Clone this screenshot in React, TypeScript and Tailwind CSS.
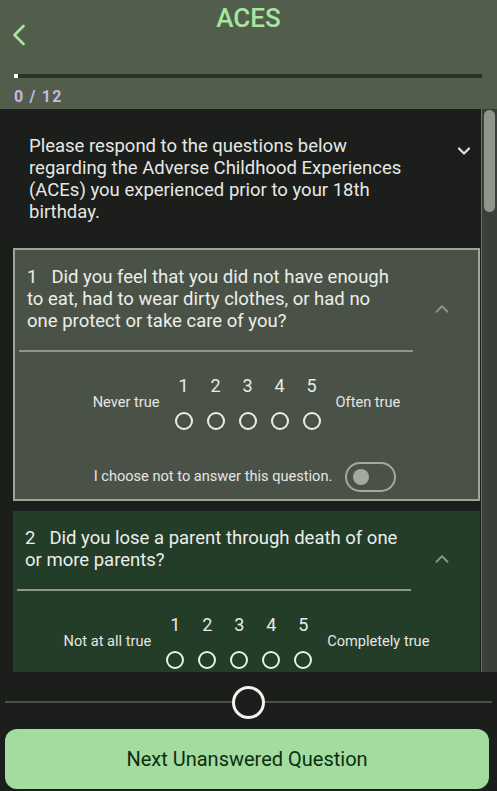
import { ChevronDown, ChevronUp } from "lucide-react";

const SCALE = [1, 2, 3, 4, 5];

function Scale({ low, high }: { low: string; high: string }) {
  return (
    <div className="flex items-center justify-center">
      <span className="text-[14.6px] text-[#e4e6e2] mr-[8px]">{low}</span>
      <div className="flex">
        {SCALE.map((n) => (
          <div key={n} className="w-[32px] flex flex-col items-center">
            <span className="text-[18px] leading-[20px] text-[#e8eae6]">{n}</span>
            <span className="mt-[16px] w-[18px] h-[18px] rounded-full border-2 border-[#eceeea]" />
          </div>
        ))}
      </div>
      <span className="text-[14.6px] text-[#e4e6e2] ml-[8px]">{high}</span>
    </div>
  );
}

function QuestionCard({
  num,
  text,
  low,
  high,
  className,
  children,
}: {
  num: number;
  text: string;
  low: string;
  high: string;
  className: string;
  children?: React.ReactNode;
}) {
  return (
    <div className={`ml-[13px] mr-[1px] ${className}`}>
      <div className="flex">
        <p className="w-[387px] pl-[12px] text-[18.5px] leading-[22px] text-[#eceeea]">
          <span className="mr-[14px]">{num}</span>
          {text}
        </p>
        <div className="flex-1 flex items-center justify-center pt-[20px] pl-[4px]">
          <ChevronUp size={22} strokeWidth={2} className="text-[#8c9489]" />
        </div>
      </div>
      <div className="ml-[4px] w-[394px] h-[2px] bg-[#8e958a] mt-[18px]" />
      <div className="mt-[24px]">
        <Scale low={low} high={high} />
      </div>
      {children}
    </div>
  );
}

export default function App() {
  return (
    <div className="w-[497px] h-[791px] flex flex-col overflow-hidden bg-[#1b1e1b] font-['Roboto',sans-serif]">
      {/* header */}
      <div className="h-[109px] shrink-0 bg-[#535d4b] px-[14px]">
        <div className="grid grid-cols-[40px_1fr_40px] grid-rows-[35px]">
          <div className="pt-[24px] -ml-[2px]">
            <svg width="14" height="22" viewBox="0 0 14 22" fill="none">
              <polyline
                points="11.5,2 2.5,11 11.5,20"
                stroke="#a8e4a2"
                strokeWidth="2.6"
                strokeLinecap="round"
                strokeLinejoin="round"
              />
            </svg>
          </div>
          <h1 className="text-center text-[26px] leading-[34px] font-medium text-[#a8e4a2] pt-[1px]">ACES</h1>
          <div />
        </div>
        <div className="mt-[39px] h-[4px] w-[468px] bg-[#2d322b] flex">
          <div className="w-[4px] h-[4px] bg-white" />
        </div>
        <div className="mt-[9px] text-[16px] leading-[20px] font-bold tracking-[1.2px] text-[#c6b8de]">0 / 12</div>
      </div>

      {/* scroll area */}
      <div className="flex-1 flex min-h-0">
        <div className="flex-1 overflow-hidden">
          <div className="flex pt-[26px] pl-[29px]">
            <p className="w-[382px] text-[18.5px] leading-[22px] text-[#e6e8e4]">
              Please respond to the questions below regarding the Adverse Childhood Experiences (ACEs) you
              experienced prior to your 18th birthday.
            </p>
            <div className="pl-[43px] pt-[6px]">
              <ChevronDown size={20} strokeWidth={2.6} className="text-[#e2e4e0]" />
            </div>
          </div>

          <div className="mt-[25px]">
            <QuestionCard
              num={1}
              text="Did you feel that you did not have enough to eat, had to wear dirty clothes, or had no one protect or take care of you?"
              low="Never true"
              high="Often true"
              className="bg-[#4a5248] border-2 border-[#9ea59a] pt-[16px] pb-[7px]"
            >
              <div className="mt-[32px] flex items-center justify-center gap-[13px] pr-[3px]">
                <span className="text-[14.6px] text-[#e4e6e2]">I choose not to answer this question.</span>
                <span className="w-[51px] h-[30px] rounded-full border-2 border-[#a3a99f] flex items-center pl-[6px]">
                  <span className="w-[16px] h-[16px] rounded-full bg-[#a3a99f]" />
                </span>
              </div>
            </QuestionCard>
          </div>

          <div className="mt-[10px]">
            <QuestionCard
              num={2}
              text="Did you lose a parent through death of one or more parents?"
              low="Not at all true"
              high="Completely true"
              className="bg-[#233d29] pt-[16px] pb-[20px]"
            />
          </div>
        </div>
        {/* scrollbar */}
        <div className="w-[16px] shrink-0 bg-[#3a3f37] border-l border-[#6b7167] pt-[1px] pl-[2px]">
          <div className="w-[11px] h-[102px] rounded-full bg-[#8e9689]" />
        </div>
      </div>

      {/* footer */}
      <div className="h-[119px] shrink-0 bg-[#1b1e1b] px-[5px] flex flex-col">
        <div className="mt-[13px] flex items-center justify-center relative h-[34px]">
          <div className="w-full h-[2px] bg-[#4a4f48]" />
          <span className="absolute w-[33px] h-[33px] rounded-full border-[3px] border-[#f2f2f0] bg-[#1b1e1b]" />
        </div>
        <button className="mt-[10px] h-[60px] w-[484px] rounded-[12px] bg-[#a2dc9f] text-[20px] text-[#0f2d10] font-normal">
          Next Unanswered Question
        </button>
      </div>
    </div>
  );
}
